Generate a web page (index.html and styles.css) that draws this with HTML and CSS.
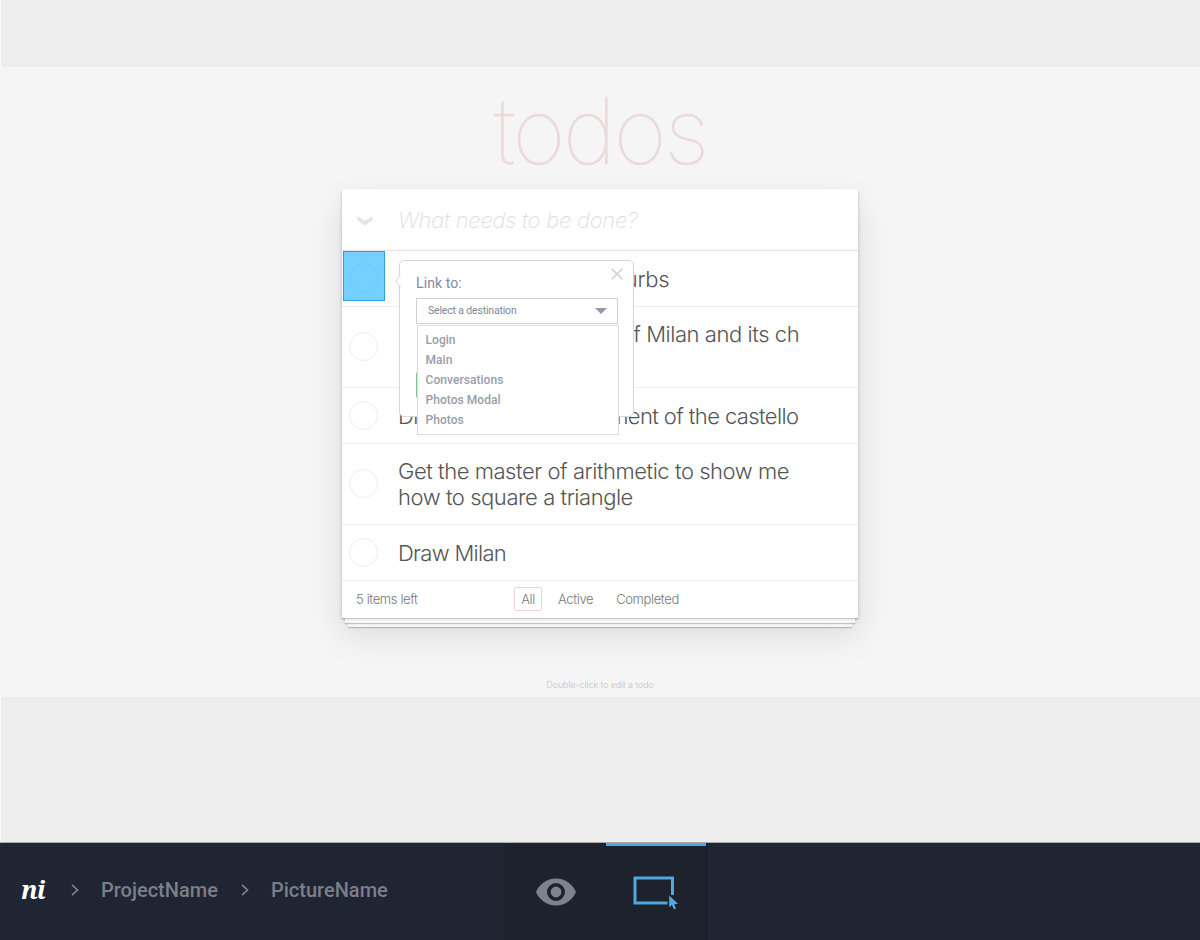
FILE: index.html
```html
<!DOCTYPE html>
<html lang="en">
<head>
<meta charset="utf-8">
<title>PictureName</title>
<link rel="stylesheet" href="styles.css">
</head>
<body>
<main class="canvas">
  <section class="picture">
    <h1 class="title">todos</h1>
    <div class="card">
      <div class="new-todo">
        <svg class="toggle-all" width="16" height="10" viewBox="0 0 16 10"><path d="M.4 0V4.200L7.900 9.500L15.400 4.200V0L7.900 5Z" fill="#e4e4e4"/></svg>
        <span class="placeholder">What needs to be done?</span>
      </div>
      <ul class="list">
        <li class="row"><i class="check"></i><span class="label l1">Draw Milan and its suburbs</span>
          <div class="hotspot"></div>
          <div class="popover">
            <svg class="arrow" width="6" height="14" viewBox="0 0 6 14"><path d="M5.500 .5L1 7L5.500 13.500" fill="#fff" stroke="#d6d6d6"/></svg>
            <svg class="close" width="12" height="12" viewBox="0 0 12 12"><path d="M.6 .6L11.400 11.400M11.400 .6L.6 11.400" stroke="#d3d3d3" stroke-width="1.500"/></svg>
            <p class="heading">Link to:</p>
            <div class="select"><span>Select a destination</span><svg width="12" height="6" viewBox="0 0 12 6"><path d="M0 0H12L6 6Z" fill="#9498a6"/></svg></div>
            <div class="save"></div>
            <ul class="menu"><li>Login</li><li>Main</li><li>Conversations</li><li>Photos Modal</li><li>Photos</li></ul>
          </div>
        </li>
        <li class="row tall"><i class="check"></i><span class="label l2">Find a book that treats of Milan and its ch</span></li>
        <li class="row"><i class="check"></i><span class="label l3">Discover the measurement of the castello</span></li>
        <li class="row tall"><i class="check"></i><span class="label l4">Get the master of arithmetic to show me<br>how to square a triangle</span></li>
        <li class="row"><i class="check"></i><span class="label l5">Draw Milan</span></li>
      </ul>
      <div class="filters">
        <span class="count">5 items left</span>
        <span class="filter selected">All</span><span class="filter active-items">Active</span><span class="filter">Completed</span>
      </div>
    </div>
    <p class="hint">Double-click to edit a todo</p>
  </section>
</main>
<footer class="toolbar">
  <nav class="crumbs">
    <span class="logo">ni</span>
    <svg class="chev" width="8" height="12" viewBox="0 0 8 12"><path d="M1 .8L6.500 6L1 11.200" fill="none" stroke="#7c808c" stroke-width="1.700"/></svg>
    <span class="crumb">ProjectName</span>
    <svg class="chev" width="8" height="12" viewBox="0 0 8 12"><path d="M1 .8L6.500 6L1 11.200" fill="none" stroke="#7c808c" stroke-width="1.700"/></svg>
    <span class="crumb">PictureName</span>
  </nav>
  <div class="tabs">
    <div class="tab"><svg width="40" height="28" viewBox="0 0 40 28"><path fill="#7d828e" fill-rule="evenodd" d="M20 .5C10.500 .5 3 6.500 0 14C3 21.500 10.500 27.500 20 27.500S37 21.500 40 14C37 6.500 29.500 .5 20 .5ZM20 5A9 9 0 1 1 20 23A9 9 0 1 1 20 5Z"/><circle cx="20" cy="14" r="5.400" fill="#7d828e"/></svg></div>
    <div class="tab active"><svg width="46" height="34" viewBox="0 0 46 34"><path d="M39.500 19V2H2V27H34.500" fill="none" stroke="#4fa8e0" stroke-width="3"/><path d="M36.200 19.500V31.200L38.900 29L41 33.300L43 32.400L41.200 28.200L45 27.700Z" fill="#4fa8e0"/></svg></div>
  </div>
</footer>
</body>
</html>
```
FILE: styles.css
```css
* { box-sizing: border-box; }
body { margin: 0; width: 1200px; height: 940px; overflow: hidden; font-family: "Inter", "Liberation Sans", sans-serif; display: flex; flex-direction: column; }
ul { list-style: none; margin: 0; padding: 0; }
p, h1 { margin: 0; }
.canvas { height: 842px; padding-top: 67px; background: #ededed; border-left: 1px solid #fafafa; }
.picture { height: 630px; margin-left: -1px; background: #f5f5f5; display: flex; flex-direction: column; align-items: center; overflow: hidden; }
.title { height: 122px; line-height: 127px; font-size: 92px; font-weight: 100; color: #ecd9d9; letter-spacing: -2.800px; -webkit-text-stroke: .4px #ecd9d9; }
.card { width: 516px; height: 429px; flex: none; background: #fff; position: relative; box-shadow: 0 1px 1px rgba(0,0,0,.2), 0 8px 0 -3px #f6f6f6, 0 9px 1px -3px rgba(0,0,0,.2), 0 15px 0 -6px #f6f6f6, 0 16px 1px -6px rgba(0,0,0,.2), 0 2px 4px rgba(0,0,0,.14), 0 16px 32px rgba(0,0,0,.11); }
.new-todo { height: 62px; display: flex; align-items: center; padding-left: 15px; border-bottom: 1px solid #e4e4e4; box-shadow: inset 0 -2px 1px rgba(0,0,0,.02); }
.toggle-all { margin-top: 3px; }
.placeholder { margin-left: 25px; font-size: 22px; font-weight: 200; font-style: italic; color: #dedede; letter-spacing: -.25px; }
.row { height: 55.500px; border-bottom: 1px solid #ededed; display: flex; align-items: center; padding-left: 7px; position: relative; }
.row.tall { height: 81.500px; }
.check { width: 29px; height: 29px; border: 1px solid #ededed; border-radius: 50%; flex: none; }
.label { margin-left: 20px; padding-top: 1px; font-size: 22px; line-height: 26px; font-weight: 300; color: #555; letter-spacing: -.6px; white-space: nowrap; }
.l1 { letter-spacing: -.25px; }
.l2 { padding-bottom: 26px; letter-spacing: -.44px; }
.l4 { letter-spacing: -.45px; }
.l5 { letter-spacing: -.7px; }
.filters { height: 38px; display: flex; align-items: center; padding: 0 0 2px 14px; font-size: 13px; font-weight: 300; color: #777; letter-spacing: -.37px; }
.count { width: 158px; }
.filter { margin-right: 16px; }
.active-items { margin-right: 23px; }
.filter.selected { border: 1px solid #efd5d5; border-radius: 2px; height: 24px; line-height: 23px; width: 28px; text-align: center; }
.hint { margin-top: 61px; font-size: 9px; line-height: 12px; font-weight: 300; color: #c4c4c4; letter-spacing: -.1px; }
.hotspot { position: absolute; left: 1px; top: 0; width: 42px; height: 50px; background: radial-gradient(circle at 20px 26px, transparent 13.500px, #69c6f5 14px, transparent 14.800px) #75cfff; border: 1px solid #2fa0dc; }
.popover { position: absolute; z-index: 2; left: 57px; top: 9px; width: 235px; height: 157px; padding: 14px 16px; background: #fff; border: 1px solid #d6d6d6; border-radius: 5px; font-family: Roboto, sans-serif; }
.arrow { position: absolute; left: -5px; top: 13px; }
.close { position: absolute; right: 10px; top: 7px; }
.heading { font-size: 14px; line-height: 16px; font-weight: 450; letter-spacing: .1px; color: #808a9f; }
.select { margin-top: 7px; width: 202px; height: 26px; padding: 0 10px 0 11px; border: 1px solid #d1d1d3; display: flex; align-items: center; justify-content: space-between; font-size: 10.500px; font-weight: 450; letter-spacing: -.17px; line-height: 24px; color: #7e879b; }
.save { width: 2px; height: 26px; margin-top: 48px; background: #82c590; border-radius: 2px 0 0 2px; }
.menu { position: absolute; left: 17px; top: 64px; width: 202px; height: 110px; padding: 4px 7.500px; background: #fff; border: 1px solid #dcdcde; font-size: 12px; font-weight: 500; line-height: 20px; letter-spacing: .05px; color: #999da8; }
.toolbar { height: 98px; background: #202533; display: flex; border-top: 1px solid #a8aaae; }
.crumbs { width: 505px; display: flex; align-items: center; padding: 0 0 3px 21px; }
.logo { font-family: "Noto Serif", "DejaVu Serif", serif; font-style: italic; font-weight: 700; font-size: 25px; color: #fff; width: 50px; letter-spacing: -1px; padding-bottom: 2px; }
.crumb { font-family: Roboto, sans-serif; font-size: 20px; font-weight: 500; color: #7b7f8a; margin: 0 23px 0 22px; width: 117px; }
.chev { flex: none; }
.tabs { display: flex; width: 202px; background: #1d222d; border: 1px solid #191d27; border-width: 0 1px; }
.tab { width: 100px; display: flex; align-items: center; justify-content: center; padding-top: 1px; }
.tab.active { border-top: 3px solid #4fa8e0; padding: 0; }
```
